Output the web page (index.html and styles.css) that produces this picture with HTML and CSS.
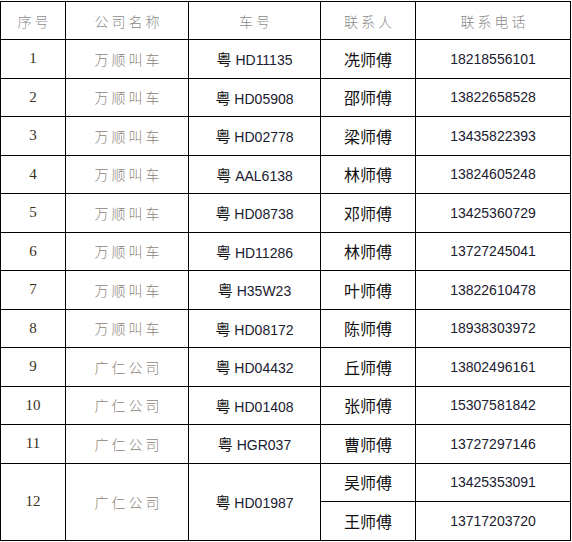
FILE: index.html
```html
<!DOCTYPE html>
<html lang="zh">
<head>
<meta charset="utf-8">
<link rel="stylesheet" href="styles.css">
</head>
<body>
<table class="grid">
  <colgroup>
    <col class="c-no"><col class="c-co"><col class="c-plate"><col class="c-name"><col class="c-tel">
  </colgroup>
  <thead>
    <tr class="head">
      <th>序号</th><th>公司名称</th><th>车号</th><th>联系人</th><th>联系电话</th>
    </tr>
  </thead>
  <tbody>
    <tr><td class="no">1</td><td class="co">万顺叫车</td><td class="plate"><span class="yue">粤</span> HD11135</td><td class="name">冼师傅</td><td class="tel">18218556101</td></tr>
    <tr><td class="no">2</td><td class="co">万顺叫车</td><td class="plate"><span class="yue">粤</span> HD05908</td><td class="name">邵师傅</td><td class="tel">13822658528</td></tr>
    <tr><td class="no">3</td><td class="co">万顺叫车</td><td class="plate"><span class="yue">粤</span> HD02778</td><td class="name">梁师傅</td><td class="tel">13435822393</td></tr>
    <tr><td class="no">4</td><td class="co">万顺叫车</td><td class="plate"><span class="yue">粤</span> AAL6138</td><td class="name">林师傅</td><td class="tel">13824605248</td></tr>
    <tr><td class="no">5</td><td class="co">万顺叫车</td><td class="plate"><span class="yue">粤</span> HD08738</td><td class="name">邓师傅</td><td class="tel">13425360729</td></tr>
    <tr><td class="no">6</td><td class="co">万顺叫车</td><td class="plate"><span class="yue">粤</span> HD11286</td><td class="name">林师傅</td><td class="tel">13727245041</td></tr>
    <tr><td class="no">7</td><td class="co">万顺叫车</td><td class="plate"><span class="yue">粤</span> H35W23</td><td class="name">叶师傅</td><td class="tel">13822610478</td></tr>
    <tr><td class="no">8</td><td class="co">万顺叫车</td><td class="plate"><span class="yue">粤</span> HD08172</td><td class="name">陈师傅</td><td class="tel">18938303972</td></tr>
    <tr><td class="no">9</td><td class="co">广仁公司</td><td class="plate"><span class="yue">粤</span> HD04432</td><td class="name">丘师傅</td><td class="tel">13802496161</td></tr>
    <tr><td class="no">10</td><td class="co">广仁公司</td><td class="plate"><span class="yue">粤</span> HD01408</td><td class="name">张师傅</td><td class="tel">15307581842</td></tr>
    <tr><td class="no">11</td><td class="co">广仁公司</td><td class="plate"><span class="yue">粤</span> HGR037</td><td class="name">曹师傅</td><td class="tel">13727297146</td></tr>
    <tr><td class="no" rowspan="2">12</td><td class="co" rowspan="2">广仁公司</td><td class="plate" rowspan="2"><span class="yue">粤</span> HD01987</td><td class="name">吴师傅</td><td class="tel">13425353091</td></tr>
    <tr><td class="name">王师傅</td><td class="tel">13717203720</td></tr>
  </tbody>
</table>
</body>
</html>
```
FILE: styles.css
```css
html, body {
  margin: 0;
  padding: 0;
  background: #fff;
}
body {
  padding-top: 1px;
}
.grid {
  border-collapse: collapse;
  table-layout: fixed;
  width: 570px;
}
.c-no { width: 65px; }
.c-co { width: 123px; }
.c-plate { width: 132px; }
.c-name { width: 95px; }
.c-tel { width: 155px; }
.grid th, .grid td {
  border: 1px solid #000;
  padding: 0;
  text-align: center;
  vertical-align: middle;
}
.head th {
  height: 37px;
  font-family: "Noto Sans CJK SC", sans-serif;
  font-weight: 300;
  font-size: 14px;
  color: #8a8a8a;
  letter-spacing: 3px;
  text-indent: 3px;
}
.grid tbody tr {
  height: 38.5px;
}
.no {
  font-family: "Liberation Serif", serif;
  font-size: 15px;
  color: #3a3020;
}
.co {
  font-family: "Noto Sans CJK SC", sans-serif;
  font-weight: 300;
  font-size: 14px;
  color: #8c8278;
  letter-spacing: 3px;
  text-indent: 3px;
}
.plate {
  font-family: "Liberation Sans", sans-serif;
  font-size: 14px;
  color: #1a2030;
}
.yue {
  font-family: "Noto Sans CJK SC", sans-serif;
  font-size: 15px;
  color: #111;
}
.name {
  font-family: "Noto Sans CJK SC", sans-serif;
  font-size: 16px;
  color: #111;
}
.tel {
  font-family: "Liberation Sans", sans-serif;
  font-size: 14px;
  color: #1a2030;
}
```
